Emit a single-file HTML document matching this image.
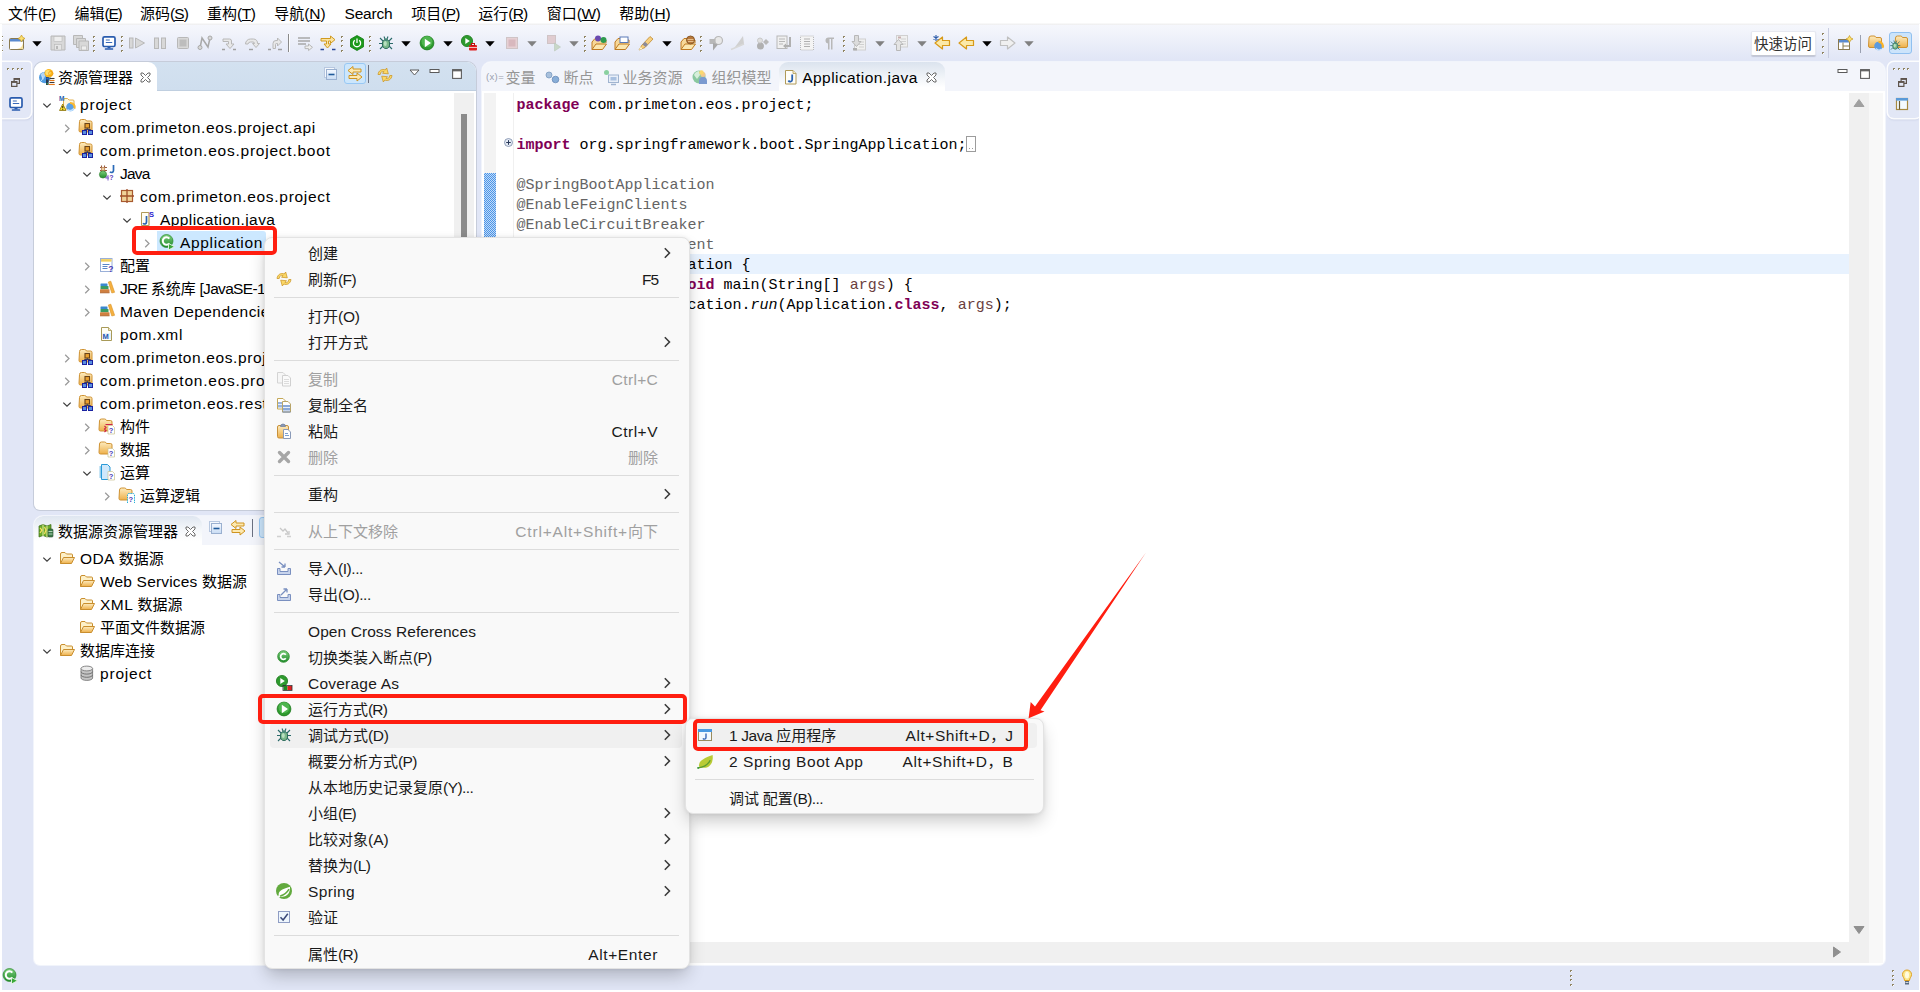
<!DOCTYPE html>
<html lang="zh-CN"><head><meta charset="utf-8"><title>Eclipse</title>
<style>
*{box-sizing:border-box}
html,body{margin:0;padding:0}
body{width:1920px;height:992px;position:relative;overflow:hidden;background:#e1e6f6;
 font-family:"Liberation Sans","Noto Sans CJK SC",sans-serif;font-size:15.5px;color:#000;}
.c{font-size:15px;letter-spacing:0}
.abs{position:absolute}
.t{position:absolute;white-space:nowrap;line-height:20px;height:20px}
svg{position:absolute;overflow:visible}
#menubar{position:absolute;left:0;top:0;width:1920px;height:24px;background:#fff}
#toolbar{position:absolute;left:0;top:24px;width:1920px;height:38px;background:linear-gradient(#f6f7fc 0%,#f2f4fb 20%,#e1e6f6 92%,#e1e6f6 100%)}
.panel{position:absolute;background:#fff;border-radius:9px 9px 6px 6px;overflow:hidden;box-shadow:0 0 0 1px rgba(255,255,255,.55)}
.hdr{position:absolute;left:0;top:0;right:0}
.code{font-family:"Liberation Mono",monospace;font-size:15px;position:absolute;white-space:pre;line-height:20px;height:20px;color:#000}
.kw{color:#7f0055;font-weight:bold}
.an{color:#646464}
.lv{color:#6a3e3e}
.menu{position:absolute;background:#f9f9f9;border:1px solid #e3e3e3;border-radius:8px;box-shadow:0 9px 18px -3px rgba(0,0,0,.24),0 0 4px rgba(0,0,0,.08)}
.mi{position:absolute;white-space:nowrap;line-height:20px;height:20px;color:#1a1a1a}
.dis{color:#a0a0a0}
.sep{position:absolute;height:1px;background:#dcdcdc}
.red{position:absolute;border:4px solid #ff1e10;border-radius:5px}
</style></head>
<body>
<svg width="0" height="0" style="position:absolute"><defs>
<linearGradient id="gf" x1="0" y1="0" x2="0" y2="1"><stop offset="0" stop-color="#fdecc0"/><stop offset="1" stop-color="#eeb04a"/></linearGradient>
<linearGradient id="gg" x1="0" y1="0" x2="0" y2="1"><stop offset="0" stop-color="#7ed07e"/><stop offset="1" stop-color="#1f8a2a"/></linearGradient>
<linearGradient id="gb" x1="0" y1="0" x2="0" y2="1"><stop offset="0" stop-color="#f4f8ff"/><stop offset="1" stop-color="#c8dcf4"/></linearGradient>
</defs></svg>
<div id="menubar"></div>
<div class="t" style="left:8px;top:4px;letter-spacing:-0.843px;"><span class="c">文件</span>(<u>F</u>)</div>
<div class="t" style="left:74.5px;top:4px;letter-spacing:-1.301px;"><span class="c">编辑</span>(<u>E</u>)</div>
<div class="t" style="left:140px;top:4px;letter-spacing:-0.901px;"><span class="c">源码</span>(<u>S</u>)</div>
<div class="t" style="left:207px;top:4px;letter-spacing:-0.443px;"><span class="c">重构</span>(<u>T</u>)</div>
<div class="t" style="left:274.3px;top:4px;letter-spacing:-0.121px;"><span class="c">导航</span>(<u>N</u>)</div>
<div class="t" style="left:344.5px;top:4px;letter-spacing:-0.188px;">Search</div>
<div class="t" style="left:411.3px;top:4px;letter-spacing:-0.834px;"><span class="c">项目</span>(<u>P</u>)</div>
<div class="t" style="left:478.3px;top:4px;letter-spacing:-0.854px;"><span class="c">运行</span>(<u>R</u>)</div>
<div class="t" style="left:546.7px;top:4px;letter-spacing:-0.333px;"><span class="c">窗口</span>(<u>W</u>)</div>
<div class="t" style="left:619.3px;top:4px;letter-spacing:-0.054px;"><span class="c">帮助</span>(<u>H</u>)</div>
<div id="toolbar"></div>
<div class="abs" style="left:1px;top:35.5px;width:2px;height:2px;background:#8f8462"></div><div class="abs" style="left:2px;top:36.5px;width:1px;height:1px;background:#fff"></div><div class="abs" style="left:1px;top:40.2px;width:2px;height:2px;background:#8f8462"></div><div class="abs" style="left:2px;top:41.2px;width:1px;height:1px;background:#fff"></div><div class="abs" style="left:1px;top:44.9px;width:2px;height:2px;background:#8f8462"></div><div class="abs" style="left:2px;top:45.9px;width:1px;height:1px;background:#fff"></div><div class="abs" style="left:1px;top:49.6px;width:2px;height:2px;background:#8f8462"></div><div class="abs" style="left:2px;top:50.6px;width:1px;height:1px;background:#fff"></div>
<svg style="left:8.5px;top:35px" width="16" height="16" viewBox="0 0 16 16" ><rect x="0.5" y="3.5" width="14" height="11" rx="1" fill="#fff" stroke="#8a7a50"/><rect x="1" y="4" width="13" height="2.5" fill="#5a8ad0"/><path d="M8 14 a7 7 0 0 0 6-6v6z" fill="#f7e3a0"/><path d="M12.5 0l1.2 2.3 2.3 1.2-2.3 1.2-1.2 2.3-1.2-2.3-2.3-1.2 2.3-1.2z" fill="#fbe070" stroke="#c89a20" stroke-width=".7"/></svg>
<svg style="left:49.5px;top:35px" width="16" height="16" viewBox="0 0 16 16" ><path d="M1 1h14v14h-14z" fill="#d8d8d8" stroke="#b8b8b8"/><rect x="4" y="1.5" width="8" height="5" fill="#eee" stroke="#b8b8b8" stroke-width=".6"/><rect x="4.5" y="9.5" width="7" height="5.5" fill="#e6e6e6" stroke="#b8b8b8" stroke-width=".6"/><rect x="6" y="11" width="2" height="3" fill="#b8b8b8"/></svg>
<svg style="left:72.5px;top:35px" width="16" height="16" viewBox="0 0 16 16" ><path d="M0.5 0.5h9v9h-9z" fill="#d8d8d8" stroke="#b8b8b8"/><path d="M3.5 3.5h9v9h-9z" fill="#d8d8d8" stroke="#b8b8b8"/><path d="M6 6h9.5v9.5h-9.5z" fill="#d8d8d8" stroke="#b8b8b8"/><rect x="8.5" y="11" width="5" height="4" fill="#eee" stroke="#b8b8b8" stroke-width=".6"/></svg>
<svg style="left:100.5px;top:35px" width="16" height="16" viewBox="0 0 16 16" ><rect x="2" y="1.800" width="12" height="9.700" rx="1.500" fill="#fff" stroke="#2a5cae" stroke-width="1.700"/><path d="M4.800 5h4M4.800 7.500h6.400" stroke="#3a6ab8" stroke-width="1.100"/><path d="M6.500 11.500h3v1.800h-3z" fill="#2a5cae"/><rect x="3.800" y="13.200" width="8.400" height="1.500" rx=".500" fill="#2a5cae"/></svg>
<svg style="left:129px;top:35px" width="16" height="16" viewBox="0 0 16 16" ><rect x="0.5" y="3" width="3.5" height="10" fill="#d8d8d8" stroke="#b8b8b8"/><path d="M6.5 3v10l9-5z" fill="#d8d8d8" stroke="#b8b8b8"/></svg>
<svg style="left:151.5px;top:35px" width="16" height="16" viewBox="0 0 16 16" ><rect x="2.5" y="3" width="4" height="10.5" fill="#d8d8d8" stroke="#b8b8b8"/><rect x="9.5" y="3" width="4" height="10.5" fill="#d8d8d8" stroke="#b8b8b8"/></svg>
<svg style="left:174.5px;top:35px" width="16" height="16" viewBox="0 0 16 16" ><rect x="2.5" y="2.5" width="11" height="11" rx="1" fill="#d8d8d8" stroke="#b8b8b8"/><rect x="4.5" y="4.5" width="7" height="7" fill="#bdbdbd"/></svg>
<svg style="left:197px;top:35px" width="16" height="16" viewBox="0 0 16 16" ><path d="M3 13 L5 3 L11 12 L13 3" fill="none" stroke="#a8a8a8" stroke-width="1.5"/><circle cx="3" cy="12.5" r="2" fill="#d8d8d8" stroke="#a8a8a8"/><circle cx="13" cy="3" r="2" fill="#d8d8d8" stroke="#a8a8a8"/></svg>
<svg style="left:220.5px;top:35px" width="16" height="16" viewBox="0 0 16 16" ><path d="M2 4h6.5a2 2 0 0 1 2 2v3h2.5l-4 4.5l-4-4.5h2.5v-2.5h-5.500z" fill="#e8e8e8" stroke="#b8b8b8"/><path d="M1 14.5h3M12 14.5h3" stroke="#a0a0a0" stroke-width="1.4"/></svg>
<svg style="left:243.5px;top:35px" width="16" height="16" viewBox="0 0 16 16" ><path d="M1.500 9 a5 5 0 0 1 5-5h3a4 4 0 0 1 4 4.500h2l-3.500 4-3.500-4h2a1.500 1.500 0 0 0-1.500-1.500h-2.500a2.500 2.500 0 0 0-2.500 2z" fill="#e8e8e8" stroke="#b8b8b8"/><path d="M5 14.5h4" stroke="#a0a0a0" stroke-width="1.4"/></svg>
<svg style="left:266.5px;top:35px" width="16" height="16" viewBox="0 0 16 16" ><path d="M6 13.5v-5a3 3 0 0 1 3-3h1.500v-2.500l4 4-4 4v-2.500h-1a1 1 0 0 0-1 1v4z" fill="#e8e8e8" stroke="#b8b8b8"/><path d="M1 14.500h3M11 14.500h4" stroke="#a0a0a0" stroke-width="1.400"/></svg>
<svg style="left:297px;top:35px" width="16" height="16" viewBox="0 0 16 16" ><path d="M1 3h12M1 6h12M1 9h8" stroke="#a8a8a8" stroke-width="1.4"/><path d="M8 11h3.500v-2l4 3.300-4 3.300v-2h-3.500z" fill="#eee" stroke="#b8b8b8"/></svg>
<svg style="left:320px;top:35px" width="16" height="16" viewBox="0 0 16 16" ><path d="M1 3.500h9.500v-2.500l4.500 3.700-4.500 3.700v-2.400h-2v3h2.500l-3.500 4-3.500-4h2.500v-3h-5.500z" fill="#fbe3a0" stroke="#d09a20"/><path d="M0.500 14.500h3.500M12 14.500h3.500" stroke="#2a4a9a" stroke-width="1.5"/></svg>
<svg style="left:348.5px;top:35px" width="16" height="16" viewBox="0 0 16 16" ><path d="M8 0.500 L14.500 4.200 V11.800 L8 15.500 L1.500 11.800 V4.200z" fill="#1c9a1c" stroke="#0e7a0e" stroke-width=".8"/><path d="M5.800 5.300a3.600 3.600 0 1 0 4.400 0" fill="none" stroke="#fff" stroke-width="1.300"/><path d="M8 3.500v4.500" stroke="#fff" stroke-width="1.300"/></svg>
<svg style="left:377.5px;top:35px" width="16" height="16" viewBox="0 0 16 16" ><path d="M2 3l3 3M14 3l-3 3M1 8.500h3.500M15 8.500h-3.500M2 14l3-3M14 14l-3-3M6 1.500l1 2.500M10 1.500l-1 2.500" stroke="#2a6a6a" stroke-width="1.100" fill="none"/><ellipse cx="8" cy="9" rx="3.600" ry="4.500" fill="#7ab88a" stroke="#2a6a5a"/><ellipse cx="8" cy="4.800" rx="2" ry="1.500" fill="#4a8a7a"/><ellipse cx="7.300" cy="8.500" rx="1.500" ry="2.500" fill="#b8e0c0"/></svg>
<svg style="left:419px;top:35px" width="16" height="16" viewBox="0 0 16 16" ><circle cx="8" cy="8" r="6.900" fill="#2e9a2e" stroke="#1a7a1a" stroke-width=".800"/><circle cx="8" cy="6.500" r="5.500" fill="#5cc05c" opacity=".7"/><path d="M5.800 3.800v8.400l6.200-4.200z" fill="#fff"/></svg>
<svg style="left:461px;top:35px" width="16" height="16" viewBox="0 0 16 16" ><circle cx="6" cy="6" r="5.600" fill="#2e9a2e" stroke="#1a7a1a" stroke-width=".800"/><path d="M4.300 3v6l4.500-3z" fill="#fff"/><rect x="8" y="10" width="8" height="5.500" rx="1" fill="#e02020"/><rect x="10.500" y="8.500" width="3" height="2" fill="none" stroke="#c01010" stroke-width="1"/><rect x="8" y="12" width="8" height="1" fill="#fff" opacity=".7"/></svg>
<svg style="left:503.5px;top:35px" width="16" height="16" viewBox="0 0 16 16" ><rect x="2.500" y="2.500" width="11" height="11" fill="#e6d0d4" stroke="#cfc4c6"/><rect x="4.500" y="4.500" width="7" height="7" fill="#d8b8be"/></svg>
<svg style="left:546px;top:35px" width="16" height="16" viewBox="0 0 16 16" ><rect x="1.500" y="0.500" width="8" height="8" fill="#e0ccd0" stroke="#cfc4c6"/><path d="M8.500 8v8l6-4z" fill="#c8d8c8" stroke="#b8c8b8" stroke-width=".600"/></svg>
<svg style="left:591px;top:35px" width="16" height="16" viewBox="0 0 16 16" ><path d="M1 14.500 V7 l3-3.500 h5 l1 1.500 h5 v3" fill="#f7d898" stroke="#c07a20"/><path d="M1 14.500 L5 9 h10.500 L11.500 14.500z" fill="#fbe7b0" stroke="#c07a20"/><circle cx="7" cy="3.500" r="3" fill="#6a4ab0"/><circle cx="12.500" cy="5" r="3" fill="#2e9a4e"/></svg>
<svg style="left:614px;top:35px" width="16" height="16" viewBox="0 0 16 16" ><path d="M1 14.500 V7 l3-3.500 h5 l1 1.500 h5 v3" fill="#f7d898" stroke="#c07a20"/><path d="M1 14.500 L5 9 h10.500 L11.500 14.500z" fill="#fbe7b0" stroke="#c07a20"/><rect x="6" y="2" width="8" height="5.500" fill="#fff" stroke="#5a7ab8"/></svg>
<svg style="left:638px;top:35px" width="16" height="16" viewBox="0 0 16 16" ><path d="M1 15 L4 10 L12 1.500 L15 4 L7 12.500z" fill="#f7d080" stroke="#c08a30" stroke-width=".800"/><path d="M4.500 9.500 L7.500 12 L10 9.500 L7 6.800z" fill="#8a8a9a"/><path d="M1 15l1.500-3 2 1.800z" fill="#fff8d0"/></svg>
<svg style="left:680px;top:35px" width="16" height="16" viewBox="0 0 16 16" ><path d="M1 14.500 V7 l3-3.500 h5 l1 1.500 h5 v3" fill="#f7d898" stroke="#c07a20"/><path d="M1 14.500 L5 9 h10.500 L11.500 14.500z" fill="#fbe7b0" stroke="#c07a20"/><circle cx="10.500" cy="5" r="4" fill="#b8783a" stroke="#8a5a2a"/><path d="M7.500 4.500h6M8 6.500h5.500" stroke="#f0d0a0" stroke-width=".800"/></svg>
<svg style="left:707.5px;top:35px" width="16" height="16" viewBox="0 0 16 16" ><circle cx="10.500" cy="5.500" r="4" fill="#e8e8e8" stroke="#b8b8b8" stroke-width="1.200"/><rect x="1.500" y="4" width="6" height="5" fill="#b8b8b8"/><path d="M5 8v7.500l5-6z" fill="#a8a8a8"/></svg>
<svg style="left:730px;top:35px" width="16" height="16" viewBox="0 0 16 16" ><path d="M13 1 L14 9 L4 13.500z" fill="#d0d0d0"/><path d="M1 14.500 L14 9" stroke="#d8d8d8" stroke-width="1.500"/></svg>
<svg style="left:754px;top:35px" width="16" height="16" viewBox="0 0 16 16" ><circle cx="6.500" cy="11" r="3.500" fill="#b0b0b0"/><circle cx="6" cy="5.500" r="2.500" fill="#e0e0e0" stroke="#c8c8c8"/><path d="M9 7 l3-3 3 3-3 3z" fill="#b8b8b8"/></svg>
<svg style="left:776px;top:35px" width="16" height="16" viewBox="0 0 16 16" ><rect x="1" y="1" width="10" height="12.500" fill="#f0f0f0" stroke="#b8b8b8"/><path d="M3 4h6M3 6.500h6M3 9h4" stroke="#b8b8b8"/><path d="M14 2v9h-5" fill="none" stroke="#b0b0b0" stroke-width="2"/><path d="M10 8.500l-3 2.500 3 2.500z" fill="#b0b0b0"/></svg>
<svg style="left:799px;top:35px" width="16" height="16" viewBox="0 0 16 16" ><rect x="1.500" y="1" width="13" height="14" fill="#f4f4f4" stroke="#b8b8b8" stroke-dasharray="1 1"/><path d="M5 4h6M5 6.500h6M5 9h6M5 11.500h6" stroke="#b0b0b0" stroke-width="1.200"/></svg>
<svg style="left:822px;top:35px" width="16" height="16" viewBox="0 0 16 16" ><path d="M6.500 8.500a3 3 0 0 1 0-6h5.500v1.500h-1.500v10.500h-1.500v-10.500h-1.500v10.500h-1.500v-6z" fill="#b8b8b8"/></svg>
<svg style="left:851px;top:35px" width="16" height="16" viewBox="0 0 16 16" ><rect x="3.500" y="4" width="11" height="11" fill="#f0f0f0" stroke="#d0d0d0"/><path d="M8 7h5M8 9.500h5M8 12h5" stroke="#d0d0d0"/><path d="M3.500 0.500h4v6h2.500l-4.500 5-4.500-5h2.500z" fill="#dcdcdc" stroke="#b8b8b8"/><rect x="2" y="13" width="4" height="2.500" fill="#b0b0b0"/></svg>
<svg style="left:893px;top:35px" width="16" height="16" viewBox="0 0 16 16" ><rect x="3.500" y="0.500" width="11" height="11.500" fill="#f0f0f0" stroke="#d0d0d0"/><path d="M8 4h5M8 6.500h5M8 9h5" stroke="#d0d0d0"/><rect x="5" y="1.500" width="3" height="2" fill="#c8b0b0"/><path d="M3.500 15.500h4v-6h2.500l-4.500-5-4.500 5h2.500z" fill="#e4e4e4" stroke="#b8b8b8"/></svg>
<svg style="left:934px;top:35px" width="16" height="16" viewBox="0 0 16 16" ><path d="M15.500 5.500v5h-7v3.500l-7.500-6 7.500-6v3.500z" fill="#fbe9a8" stroke="#d89a18" stroke-width="1.200" stroke-linejoin="round"/><path d="M2 0v6M-.500 1.500l5 3M-.500 4.500l5-3" stroke="#2a5aa8" stroke-width="1.100"/></svg>
<svg style="left:958px;top:35px" width="16" height="16" viewBox="0 0 16 16" ><path d="M15.500 5.500v5h-7v3.500l-7.500-6 7.500-6v3.500z" fill="#fbe9a8" stroke="#d89a18" stroke-width="1.200" stroke-linejoin="round"/></svg>
<svg style="left:1000px;top:35px" width="16" height="16" viewBox="0 0 16 16" ><path d="M0.500 5.500v5h7v3.500l7.500-6-7.500-6v3.500z" fill="#f0f0f0" stroke="#c0c0c0" stroke-width="1.200" stroke-linejoin="round"/></svg>
<svg style="left:31.5px;top:40.5px" width="10" height="6" viewBox="0 0 10 6"><path d="M0.3 0.3h9.4L5 5.4z" fill="#000"/></svg>
<svg style="left:400.5px;top:40.5px" width="10" height="6" viewBox="0 0 10 6"><path d="M0.3 0.3h9.4L5 5.4z" fill="#000"/></svg>
<svg style="left:442.5px;top:40.5px" width="10" height="6" viewBox="0 0 10 6"><path d="M0.3 0.3h9.4L5 5.4z" fill="#000"/></svg>
<svg style="left:484.5px;top:40.5px" width="10" height="6" viewBox="0 0 10 6"><path d="M0.3 0.3h9.4L5 5.4z" fill="#000"/></svg>
<svg style="left:661.5px;top:40.5px" width="10" height="6" viewBox="0 0 10 6"><path d="M0.3 0.3h9.4L5 5.4z" fill="#000"/></svg>
<svg style="left:981.5px;top:40.5px" width="10" height="6" viewBox="0 0 10 6"><path d="M0.3 0.3h9.4L5 5.4z" fill="#000"/></svg>
<svg style="left:526.5px;top:40.5px" width="10" height="6" viewBox="0 0 10 6"><path d="M0.3 0.3h9.4L5 5.4z" fill="#808080"/></svg>
<svg style="left:568.5px;top:40.5px" width="10" height="6" viewBox="0 0 10 6"><path d="M0.3 0.3h9.4L5 5.4z" fill="#808080"/></svg>
<svg style="left:874.5px;top:40.5px" width="10" height="6" viewBox="0 0 10 6"><path d="M0.3 0.3h9.4L5 5.4z" fill="#808080"/></svg>
<svg style="left:916.5px;top:40.5px" width="10" height="6" viewBox="0 0 10 6"><path d="M0.3 0.3h9.4L5 5.4z" fill="#808080"/></svg>
<svg style="left:1023.5px;top:40.5px" width="10" height="6" viewBox="0 0 10 6"><path d="M0.3 0.3h9.4L5 5.4z" fill="#808080"/></svg>
<div class="abs" style="left:93px;top:35.5px;width:2px;height:2px;background:#8f8462"></div><div class="abs" style="left:94px;top:36.5px;width:1px;height:1px;background:#fff"></div><div class="abs" style="left:93px;top:40.2px;width:2px;height:2px;background:#8f8462"></div><div class="abs" style="left:94px;top:41.2px;width:1px;height:1px;background:#fff"></div><div class="abs" style="left:93px;top:44.9px;width:2px;height:2px;background:#8f8462"></div><div class="abs" style="left:94px;top:45.9px;width:1px;height:1px;background:#fff"></div><div class="abs" style="left:93px;top:49.6px;width:2px;height:2px;background:#8f8462"></div><div class="abs" style="left:94px;top:50.6px;width:1px;height:1px;background:#fff"></div>
<div class="abs" style="left:121px;top:35.5px;width:2px;height:2px;background:#8f8462"></div><div class="abs" style="left:122px;top:36.5px;width:1px;height:1px;background:#fff"></div><div class="abs" style="left:121px;top:40.2px;width:2px;height:2px;background:#8f8462"></div><div class="abs" style="left:122px;top:41.2px;width:1px;height:1px;background:#fff"></div><div class="abs" style="left:121px;top:44.9px;width:2px;height:2px;background:#8f8462"></div><div class="abs" style="left:122px;top:45.9px;width:1px;height:1px;background:#fff"></div><div class="abs" style="left:121px;top:49.6px;width:2px;height:2px;background:#8f8462"></div><div class="abs" style="left:122px;top:50.6px;width:1px;height:1px;background:#fff"></div>
<div class="abs" style="left:341px;top:35.5px;width:2px;height:2px;background:#8f8462"></div><div class="abs" style="left:342px;top:36.5px;width:1px;height:1px;background:#fff"></div><div class="abs" style="left:341px;top:40.2px;width:2px;height:2px;background:#8f8462"></div><div class="abs" style="left:342px;top:41.2px;width:1px;height:1px;background:#fff"></div><div class="abs" style="left:341px;top:44.9px;width:2px;height:2px;background:#8f8462"></div><div class="abs" style="left:342px;top:45.9px;width:1px;height:1px;background:#fff"></div><div class="abs" style="left:341px;top:49.6px;width:2px;height:2px;background:#8f8462"></div><div class="abs" style="left:342px;top:50.6px;width:1px;height:1px;background:#fff"></div>
<div class="abs" style="left:369px;top:35.5px;width:2px;height:2px;background:#8f8462"></div><div class="abs" style="left:370px;top:36.5px;width:1px;height:1px;background:#fff"></div><div class="abs" style="left:369px;top:40.2px;width:2px;height:2px;background:#8f8462"></div><div class="abs" style="left:370px;top:41.2px;width:1px;height:1px;background:#fff"></div><div class="abs" style="left:369px;top:44.9px;width:2px;height:2px;background:#8f8462"></div><div class="abs" style="left:370px;top:45.9px;width:1px;height:1px;background:#fff"></div><div class="abs" style="left:369px;top:49.6px;width:2px;height:2px;background:#8f8462"></div><div class="abs" style="left:370px;top:50.6px;width:1px;height:1px;background:#fff"></div>
<div class="abs" style="left:584px;top:35.5px;width:2px;height:2px;background:#8f8462"></div><div class="abs" style="left:585px;top:36.5px;width:1px;height:1px;background:#fff"></div><div class="abs" style="left:584px;top:40.2px;width:2px;height:2px;background:#8f8462"></div><div class="abs" style="left:585px;top:41.2px;width:1px;height:1px;background:#fff"></div><div class="abs" style="left:584px;top:44.9px;width:2px;height:2px;background:#8f8462"></div><div class="abs" style="left:585px;top:45.9px;width:1px;height:1px;background:#fff"></div><div class="abs" style="left:584px;top:49.6px;width:2px;height:2px;background:#8f8462"></div><div class="abs" style="left:585px;top:50.6px;width:1px;height:1px;background:#fff"></div>
<div class="abs" style="left:700px;top:35.5px;width:2px;height:2px;background:#8f8462"></div><div class="abs" style="left:701px;top:36.5px;width:1px;height:1px;background:#fff"></div><div class="abs" style="left:700px;top:40.2px;width:2px;height:2px;background:#8f8462"></div><div class="abs" style="left:701px;top:41.2px;width:1px;height:1px;background:#fff"></div><div class="abs" style="left:700px;top:44.9px;width:2px;height:2px;background:#8f8462"></div><div class="abs" style="left:701px;top:45.9px;width:1px;height:1px;background:#fff"></div><div class="abs" style="left:700px;top:49.6px;width:2px;height:2px;background:#8f8462"></div><div class="abs" style="left:701px;top:50.6px;width:1px;height:1px;background:#fff"></div>
<div class="abs" style="left:843px;top:35.5px;width:2px;height:2px;background:#8f8462"></div><div class="abs" style="left:844px;top:36.5px;width:1px;height:1px;background:#fff"></div><div class="abs" style="left:843px;top:40.2px;width:2px;height:2px;background:#8f8462"></div><div class="abs" style="left:844px;top:41.2px;width:1px;height:1px;background:#fff"></div><div class="abs" style="left:843px;top:44.9px;width:2px;height:2px;background:#8f8462"></div><div class="abs" style="left:844px;top:45.9px;width:1px;height:1px;background:#fff"></div><div class="abs" style="left:843px;top:49.6px;width:2px;height:2px;background:#8f8462"></div><div class="abs" style="left:844px;top:50.6px;width:1px;height:1px;background:#fff"></div>
<div class="abs" style="left:288px;top:34px;width:1px;height:18px;background:#8a8a8a"></div><div class="abs" style="left:289px;top:34px;width:1px;height:18px;background:#fff"></div>
<div class="abs" style="left:1750.500px;top:30.500px;width:65px;height:25px;background:#fff;border:1px solid #e6e8f0;border-bottom-color:#c4c7d2;border-radius:2px;box-shadow:0 1px 1px rgba(90,95,120,.25)"></div>
<div class="t" style="left:1754px;top:34px;color:#303030"><span class="c" style="font-size:14.500px">快速访问</span></div>
<div class="abs" style="left:1822px;top:33.0px;width:2px;height:2px;background:#8f8462"></div><div class="abs" style="left:1823px;top:34.0px;width:1px;height:1px;background:#fff"></div>
<div class="abs" style="left:1822px;top:39.4px;width:2px;height:2px;background:#8f8462"></div><div class="abs" style="left:1823px;top:40.4px;width:1px;height:1px;background:#fff"></div>
<div class="abs" style="left:1822px;top:45.8px;width:2px;height:2px;background:#8f8462"></div><div class="abs" style="left:1823px;top:46.8px;width:1px;height:1px;background:#fff"></div>
<div class="abs" style="left:1822px;top:52.2px;width:2px;height:2px;background:#8f8462"></div><div class="abs" style="left:1823px;top:53.2px;width:1px;height:1px;background:#fff"></div>
<div class="abs" style="left:1828px;top:28px;width:1px;height:30px;background:#c8cce0"></div>
<svg style="left:1837px;top:35px" width="16" height="16" viewBox="0 0 16 16" ><rect x="1.500" y="4.500" width="11" height="10" fill="#fff" stroke="#8a7a50"/><rect x="2" y="5" width="10" height="2.500" fill="#5a8ad0"/><path d="M6 7.500v7M6 11h6.500" stroke="#8a7a50"/><path d="M12.500 0.500l1.200 2.300 2.300 1.200-2.300 1.200-1.200 2.300-1.200-2.300-2.300-1.200 2.300-1.200z" fill="#fbe070" stroke="#c89a20" stroke-width=".700"/></svg>
<div class="abs" style="left:1860px;top:35px;width:1px;height:18px;background:#9aa0b0"></div>
<svg style="left:1868px;top:35px" width="16" height="16" viewBox="0 0 16 16" ><path d="M1.0 3.0 q0-2 2-2 h3 q1.500 0 2 1.500 h4.0 q1.500 0 1.500 1.500 v7.0 q0 1.500-1.500 1.500 h-10.0 q-1.500 0-1.500-1.500z" fill="url(#gf)" stroke="#cf9232" stroke-width="1"/><circle cx="10.500" cy="11" r="4.300" fill="#5a9ae0"/><path d="M8 13.500a4 4 0 0 0 5.500 .500" fill="none" stroke="#cfe4fb" stroke-width="1.200"/><path d="M10.500 6.800a4.300 4.300 0 0 1 4 6" fill="none" stroke="#fbb428" stroke-width="2.200"/></svg>
<div class="abs" style="left:1889px;top:32px;width:23px;height:22px;background:#cce4fb;border:1px solid #90c0f0;border-radius:3px"></div>
<svg style="left:1892px;top:35px" width="16" height="16" viewBox="0 0 16 16" ><path d="M3.5 3.0 q0-2 2-2 h3 q1.500 0 2 1.500 h3.5 q1.500 0 1.500 1.500 v7.0 q0 1.500-1.500 1.500 h-9.5 q-1.500 0-1.500-1.500z" fill="url(#gf)" stroke="#cf9232" stroke-width="1"/><g transform="translate(-2.500,4.500) scale(.72)"><path d="M2 3l3 3M14 3l-3 3M1 8.500h3.500M15 8.500h-3.500M2 14l3-3M14 14l-3-3M6 1.500l1 2.500M10 1.500l-1 2.500" stroke="#2a6a6a" stroke-width="1.100" fill="none"/><ellipse cx="8" cy="9" rx="3.600" ry="4.500" fill="#7ab88a" stroke="#2a6a5a"/><ellipse cx="8" cy="4.800" rx="2" ry="1.500" fill="#4a8a7a"/><ellipse cx="7.300" cy="8.500" rx="1.500" ry="2.500" fill="#b8e0c0"/></g></svg>
<div class="abs" style="left:-3px;top:62px;width:33.500px;height:56px;border-radius:0 3px 6px 6px;background:#e2e7f6;box-shadow:0 0 0 1.500px rgba(255,255,255,.9), 1px 2px 2px rgba(120,130,170,.25)"></div>
<div class="abs" style="left:1888px;top:62px;width:33px;height:56px;border-radius:6px 0 6px 6px;background:#e2e7f6;box-shadow:0 0 0 1.500px rgba(255,255,255,.9), 0 2px 2px rgba(120,130,170,.25)"></div>
<div class="abs" style="left:0;top:22.500px;width:1920px;height:2px;background:linear-gradient(#fff,#efefef 60%,#f3f3f6)"></div>
<div class="abs" style="left:7.0px;top:67.5px;width:2px;height:2px;background:#8f8462"></div><div class="abs" style="left:8.0px;top:68.5px;width:1px;height:1px;background:#fff"></div><div class="abs" style="left:11.8px;top:67.5px;width:2px;height:2px;background:#8f8462"></div><div class="abs" style="left:12.8px;top:68.5px;width:1px;height:1px;background:#fff"></div><div class="abs" style="left:16.6px;top:67.5px;width:2px;height:2px;background:#8f8462"></div><div class="abs" style="left:17.6px;top:68.5px;width:1px;height:1px;background:#fff"></div><div class="abs" style="left:21.4px;top:67.5px;width:2px;height:2px;background:#8f8462"></div><div class="abs" style="left:22.4px;top:68.5px;width:1px;height:1px;background:#fff"></div>
<svg style="left:10.7px;top:77.5px" width="9" height="9" viewBox="0 0 9 9" ><rect x="3.100" y="0.600" width="5.300" height="4.800" fill="none" stroke="#5e544c" stroke-width="1.200"/><path d="M3.100 1.200h5.300" stroke="#5e544c" stroke-width="1.400"/><rect x="0.600" y="3.600" width="5.300" height="4.800" fill="#e3e8f7" stroke="#5e544c" stroke-width="1.200"/><path d="M0.600 4.200h5.300" stroke="#5e544c" stroke-width="1.400"/></svg>
<svg style="left:7.5px;top:95.5px" width="16" height="16" viewBox="0 0 16 16" ><rect x="2" y="1.800" width="12" height="9.700" rx="1.500" fill="#fff" stroke="#2a5cae" stroke-width="1.700"/><path d="M4.800 5h4M4.800 7.500h6.400" stroke="#3a6ab8" stroke-width="1.100"/><path d="M6.500 11.500h3v1.800h-3z" fill="#2a5cae"/><rect x="3.800" y="13.200" width="8.400" height="1.500" rx=".500" fill="#2a5cae"/></svg>
<div class="abs" style="left:1893.0px;top:67.5px;width:2px;height:2px;background:#8f8462"></div><div class="abs" style="left:1894.0px;top:68.5px;width:1px;height:1px;background:#fff"></div><div class="abs" style="left:1897.8px;top:67.5px;width:2px;height:2px;background:#8f8462"></div><div class="abs" style="left:1898.8px;top:68.5px;width:1px;height:1px;background:#fff"></div><div class="abs" style="left:1902.6px;top:67.5px;width:2px;height:2px;background:#8f8462"></div><div class="abs" style="left:1903.6px;top:68.5px;width:1px;height:1px;background:#fff"></div><div class="abs" style="left:1907.4px;top:67.5px;width:2px;height:2px;background:#8f8462"></div><div class="abs" style="left:1908.4px;top:68.5px;width:1px;height:1px;background:#fff"></div>
<svg style="left:1897.5px;top:77.5px" width="9" height="9" viewBox="0 0 9 9" ><rect x="3.100" y="0.600" width="5.300" height="4.800" fill="none" stroke="#5e544c" stroke-width="1.200"/><path d="M3.100 1.200h5.300" stroke="#5e544c" stroke-width="1.400"/><rect x="0.600" y="3.600" width="5.300" height="4.800" fill="#e3e8f7" stroke="#5e544c" stroke-width="1.200"/><path d="M0.600 4.200h5.300" stroke="#5e544c" stroke-width="1.400"/></svg>
<svg style="left:1894px;top:96px" width="16" height="16" viewBox="0 0 16 16" ><rect x="2.500" y="2.500" width="11" height="11" fill="#f4fbff" stroke="#a88a40" stroke-width="1.200"/><rect x="2" y="2" width="12" height="2.600" fill="#5a9ad8"/><path d="M5.500 5v8.500" stroke="#6a5a30" stroke-width="1.200"/></svg>
<div class="panel" style="left:34px;top:62px;width:442px;height:448px;box-shadow:0 0 0 1px #c6ccda">
<div class="hdr" style="height:29px;background:linear-gradient(#d3e1f0,#cfdeee);border-bottom:1px solid #c0cfe0"></div>
<div class="abs" style="left:0;top:0;width:123px;height:30px;background:#fff;border-radius:9px 9px 0 0"></div>
<div class="abs" style="left:420px;top:31px;width:20px;height:417px;background:#f0f0f0"></div>
<div class="abs" style="left:427px;top:52px;width:6px;height:400px;background:#8b8b8b"></div>
</div>
<div class="abs" style="left:157px;top:231px;width:109px;height:22px;background:#cce8ff;border-radius:0 3px 3px 0"></div>
<svg style="left:39px;top:96px" width="16" height="16" viewBox="0 0 16 16" ><path d="M4.3 7.6 L8 11.2 L11.700 7.600" fill="none" stroke="#3c3c3c" stroke-width="1.250"/></svg>
<svg style="left:59px;top:96px" width="16" height="16" viewBox="0 0 16 16" ><path d="M4.500 4 q0-1.500 1.500-1.500 h2.500 l1.500 1.500 h4 q1 0 1 1 v8 h-10.500z" fill="#fdf6e0" stroke="#e0b050" stroke-width="1"/><text x="0" y="5" font-size="6.500" font-weight="bold" fill="#1f5fb0" font-family="Liberation Sans,sans-serif">M</text><circle cx="11.500" cy="11" r="4.300" fill="#5aa0e6"/><path d="M8.500 13.500a4 4 0 0 0 6.500-1.500" fill="none" stroke="#bfe0ff" stroke-width="1.500"/><path d="M11 7a4.300 4.300 0 0 1 4.500 5.500" fill="none" stroke="#fbb830" stroke-width="2.200"/><path d="M0.500 14.500 L3.700 8 L7 14.500z" fill="#fbe22a" stroke="#8a7410" stroke-width=".800" stroke-linejoin="round"/><path d="M3.750 10v2.300M3.750 13.100v.800" stroke="#1a1a1a" stroke-width="1"/></svg>
<div class="t" style="left:80px;top:95px;letter-spacing:0.810px;">project</div>
<svg style="left:59px;top:119px" width="16" height="16" viewBox="0 0 16 16" ><path d="M6.200 5.800 L10 9.500 L6.200 13.200" fill="none" stroke="#9a9a9a" stroke-width="1.250"/></svg>
<svg style="left:79px;top:119px" width="16" height="16" viewBox="0 0 16 16" ><path d="M0.5 2.5 q0-2 2-2 h3 q1.500 0 2 1.500 h4.0 q1.500 0 1.500 1.500 v8.0 q0 1.500-1.500 1.500 h-10.0 q-1.500 0-1.500-1.500z" fill="url(#gf)" stroke="#cf9232" stroke-width="1"/><rect x="6" y="4.500" width="4.500" height="4.500" fill="#e9a030" stroke="#6b4418" stroke-width="1.100"/><path d="M8.250 9v2M5.500 11.500v-1h6v1" stroke="#3a3a5a" fill="none" stroke-width="1"/><rect x="3.500" y="11.500" width="4" height="4" fill="#5a90e0" stroke="#1a22a0" stroke-width="1"/><rect x="9.500" y="11.500" width="4" height="4" fill="#5a90e0" stroke="#1a22a0" stroke-width="1"/></svg>
<div class="t" style="left:100px;top:118px;letter-spacing:0.596px;">com.primeton.eos.project.api</div>
<svg style="left:59px;top:142px" width="16" height="16" viewBox="0 0 16 16" ><path d="M4.3 7.6 L8 11.2 L11.700 7.600" fill="none" stroke="#3c3c3c" stroke-width="1.250"/></svg>
<svg style="left:79px;top:142px" width="16" height="16" viewBox="0 0 16 16" ><path d="M0.5 2.5 q0-2 2-2 h3 q1.500 0 2 1.500 h4.0 q1.500 0 1.500 1.500 v8.0 q0 1.500-1.500 1.500 h-10.0 q-1.500 0-1.500-1.500z" fill="url(#gf)" stroke="#cf9232" stroke-width="1"/><rect x="6" y="4.500" width="4.500" height="4.500" fill="#e9a030" stroke="#6b4418" stroke-width="1.100"/><path d="M8.250 9v2M5.500 11.500v-1h6v1" stroke="#3a3a5a" fill="none" stroke-width="1"/><rect x="3.500" y="11.500" width="4" height="4" fill="#5a90e0" stroke="#1a22a0" stroke-width="1"/><rect x="9.500" y="11.500" width="4" height="4" fill="#5a90e0" stroke="#1a22a0" stroke-width="1"/></svg>
<div class="t" style="left:100px;top:141px;letter-spacing:0.766px;">com.primeton.eos.project.boot</div>
<svg style="left:79px;top:165px" width="16" height="16" viewBox="0 0 16 16" ><path d="M4.3 7.6 L8 11.2 L11.700 7.600" fill="none" stroke="#3c3c3c" stroke-width="1.250"/></svg>
<svg style="left:99px;top:165px" width="16" height="16" viewBox="0 0 16 16" ><path d="M2.500 0.500v7M5.500 0.500v7M1 2.500h7M1 5.500h7" stroke="#9a5a3a" stroke-width="1.100"/><rect x="2.500" y="2.500" width="3" height="3" fill="#f0d0a0"/><circle cx="4" cy="9.500" r="3.600" fill="url(#gg)" stroke="#2a7a2a" stroke-width=".600"/><path d="M14.500 0v5.500a2 2 0 0 1-3.500 1.300" fill="none" stroke="#2a6ab8" stroke-width="1.700"/><text x="10.300" y="15" font-size="7" font-weight="bold" fill="#5a3ab8" font-family="Liberation Sans,sans-serif">?</text><path d="M9 10.500l-2.500 2.500h3.500M9 10.500v5" stroke="#7a5ac8" stroke-width="1" fill="none"/></svg>
<div class="t" style="left:120px;top:164px;letter-spacing:-0.812px;">Java</div>
<svg style="left:99px;top:188px" width="16" height="16" viewBox="0 0 16 16" ><path d="M4.3 7.6 L8 11.2 L11.700 7.600" fill="none" stroke="#3c3c3c" stroke-width="1.250"/></svg>
<svg style="left:119px;top:188px" width="16" height="16" viewBox="0 0 16 16" ><rect x="2.500" y="2.500" width="11" height="11" fill="#f0d49a" stroke="#a85a30" stroke-width="1.200"/><path d="M8 1v14M1 8h14" stroke="#a0502a" stroke-width="1.300"/></svg>
<div class="t" style="left:140px;top:187px;letter-spacing:0.695px;">com.primeton.eos.project</div>
<svg style="left:119px;top:211px" width="16" height="16" viewBox="0 0 16 16" ><path d="M4.3 7.6 L8 11.2 L11.700 7.600" fill="none" stroke="#3c3c3c" stroke-width="1.250"/></svg>
<svg style="left:139px;top:211px" width="16" height="16" viewBox="0 0 16 16" ><path d="M2.500 1.500h7.500v13h-7.500z" fill="#fffdf4" stroke="#b09a58" stroke-width="1"/><path d="M10 1.500v13" stroke="#c8b880"/><path d="M7.500 5v6a2 2 0 0 1-3.500 1.300" fill="none" stroke="#2a62b0" stroke-width="1.700"/><text x="10" y="6" font-size="7.500" font-weight="bold" fill="#2a22d0" font-family="Liberation Sans,sans-serif">S</text></svg>
<div class="t" style="left:160px;top:210px;letter-spacing:0.426px;">Application.java</div>
<svg style="left:139px;top:234px" width="16" height="16" viewBox="0 0 16 16" ><path d="M6.200 5.800 L10 9.500 L6.200 13.200" fill="none" stroke="#9a9a9a" stroke-width="1.250"/></svg>
<svg style="left:159px;top:234px" width="16" height="16" viewBox="0 0 16 16" ><circle cx="7.500" cy="7" r="6.500" fill="url(#gg)" stroke="#2a8a2a" stroke-width=".700"/><path d="M10.300 4.600a3.700 3.700 0 1 0 0 4.800" fill="none" stroke="#fff" stroke-width="2"/><path d="M9.500 9.500v6.500l6-3.300z" fill="#3aa83a" stroke="#eaf6ea" stroke-width=".900" stroke-linejoin="round"/></svg>
<div class="t" style="left:180px;top:233px;letter-spacing:0.652px;">Application</div>
<svg style="left:79px;top:257px" width="16" height="16" viewBox="0 0 16 16" ><path d="M6.200 5.800 L10 9.500 L6.200 13.200" fill="none" stroke="#9a9a9a" stroke-width="1.250"/></svg>
<svg style="left:99px;top:257px" width="16" height="16" viewBox="0 0 16 16" ><rect x="1.500" y="1.500" width="11.500" height="13" fill="#fff" stroke="#9ab0d8"/><rect x="2" y="2" width="10.500" height="2.800" fill="#f7dc78"/><path d="M2 3.200h10.500" stroke="#e8c050" stroke-width=".800"/><path d="M3.500 7.500h7M3.500 9.500h5M3.500 11.500h5" stroke="#5a86c8" stroke-width="1"/><text x="9.300" y="15.300" font-size="8.500" font-weight="bold" fill="#4a3ab8" font-family="Liberation Sans,sans-serif">?</text></svg>
<div class="t" style="left:120px;top:256px;"><span class="c">配置</span></div>
<svg style="left:79px;top:280px" width="16" height="16" viewBox="0 0 16 16" ><path d="M6.200 5.800 L10 9.500 L6.200 13.200" fill="none" stroke="#9a9a9a" stroke-width="1.250"/></svg>
<svg style="left:99px;top:280px" width="16" height="16" viewBox="0 0 16 16" ><rect x="1.500" y="3.500" width="7" height="2.600" rx=".500" fill="#3a88d0"/><rect x="1.500" y="6.100" width="8" height="3.200" rx=".500" fill="#3a9a62"/><rect x="1" y="9.300" width="9.500" height="3.400" rx=".500" fill="#d08040"/><path d="M1 12.800h9.500" stroke="#a85a20" stroke-width=".800"/><path d="M9.300 2 L11.800 1.200 L15.600 12.300 L12.800 13 z" fill="#f5b040" stroke="#d89020" stroke-width=".600"/></svg>
<div class="t" style="left:120px;top:279px;letter-spacing:-0.686px;">JRE <span class="c">系统库</span> [JavaSE-1.8]</div>
<svg style="left:79px;top:303px" width="16" height="16" viewBox="0 0 16 16" ><path d="M6.200 5.800 L10 9.500 L6.200 13.200" fill="none" stroke="#9a9a9a" stroke-width="1.250"/></svg>
<svg style="left:99px;top:303px" width="16" height="16" viewBox="0 0 16 16" ><rect x="1.500" y="3.500" width="7" height="2.600" rx=".500" fill="#3a88d0"/><rect x="1.500" y="6.100" width="8" height="3.200" rx=".500" fill="#3a9a62"/><rect x="1" y="9.300" width="9.500" height="3.400" rx=".500" fill="#d08040"/><path d="M1 12.800h9.500" stroke="#a85a20" stroke-width=".800"/><path d="M9.300 2 L11.800 1.200 L15.600 12.300 L12.800 13 z" fill="#f5b040" stroke="#d89020" stroke-width=".600"/></svg>
<div class="t" style="left:120px;top:302px;letter-spacing:0.448px;">Maven Dependencies</div>
<svg style="left:99px;top:326px" width="16" height="16" viewBox="0 0 16 16" ><path d="M2.500 1.500h7l3 3v10h-10z" fill="#fffef6" stroke="#a89a58"/><path d="M9.500 1.500v3h3" fill="#f0e8c0" stroke="#a89a58" stroke-width=".800"/><rect x="3.500" y="7" width="8.500" height="6" fill="#e8f0fb"/><text x="3.500" y="12.700" font-size="7.500" font-weight="bold" fill="#2a5ab0" font-family="Liberation Sans,sans-serif">M</text></svg>
<div class="t" style="left:120px;top:325px;letter-spacing:0.632px;">pom.xml</div>
<svg style="left:59px;top:349px" width="16" height="16" viewBox="0 0 16 16" ><path d="M6.200 5.800 L10 9.500 L6.200 13.200" fill="none" stroke="#9a9a9a" stroke-width="1.250"/></svg>
<svg style="left:79px;top:349px" width="16" height="16" viewBox="0 0 16 16" ><path d="M0.5 2.5 q0-2 2-2 h3 q1.500 0 2 1.500 h4.0 q1.500 0 1.500 1.500 v8.0 q0 1.500-1.500 1.500 h-10.0 q-1.500 0-1.500-1.500z" fill="url(#gf)" stroke="#cf9232" stroke-width="1"/><rect x="6" y="4.500" width="4.500" height="4.500" fill="#e9a030" stroke="#6b4418" stroke-width="1.100"/><path d="M8.250 9v2M5.500 11.500v-1h6v1" stroke="#3a3a5a" fill="none" stroke-width="1"/><rect x="3.500" y="11.500" width="4" height="4" fill="#5a90e0" stroke="#1a22a0" stroke-width="1"/><rect x="9.500" y="11.500" width="4" height="4" fill="#5a90e0" stroke="#1a22a0" stroke-width="1"/></svg>
<div class="t" style="left:100px;top:348px;letter-spacing:0.620px;">com.primeton.eos.project.common</div>
<svg style="left:59px;top:372px" width="16" height="16" viewBox="0 0 16 16" ><path d="M6.200 5.800 L10 9.500 L6.200 13.200" fill="none" stroke="#9a9a9a" stroke-width="1.250"/></svg>
<svg style="left:79px;top:372px" width="16" height="16" viewBox="0 0 16 16" ><path d="M0.5 2.5 q0-2 2-2 h3 q1.500 0 2 1.500 h4.0 q1.500 0 1.500 1.500 v8.0 q0 1.500-1.500 1.500 h-10.0 q-1.500 0-1.500-1.500z" fill="url(#gf)" stroke="#cf9232" stroke-width="1"/><rect x="6" y="4.500" width="4.500" height="4.500" fill="#e9a030" stroke="#6b4418" stroke-width="1.100"/><path d="M8.250 9v2M5.500 11.500v-1h6v1" stroke="#3a3a5a" fill="none" stroke-width="1"/><rect x="3.500" y="11.500" width="4" height="4" fill="#5a90e0" stroke="#1a22a0" stroke-width="1"/><rect x="9.500" y="11.500" width="4" height="4" fill="#5a90e0" stroke="#1a22a0" stroke-width="1"/></svg>
<div class="t" style="left:100px;top:371px;letter-spacing:0.776px;">com.primeton.eos.project.core</div>
<svg style="left:59px;top:395px" width="16" height="16" viewBox="0 0 16 16" ><path d="M4.3 7.6 L8 11.2 L11.700 7.600" fill="none" stroke="#3c3c3c" stroke-width="1.250"/></svg>
<svg style="left:79px;top:395px" width="16" height="16" viewBox="0 0 16 16" ><path d="M0.5 2.5 q0-2 2-2 h3 q1.500 0 2 1.500 h4.0 q1.500 0 1.500 1.500 v8.0 q0 1.500-1.500 1.500 h-10.0 q-1.500 0-1.500-1.500z" fill="url(#gf)" stroke="#cf9232" stroke-width="1"/><rect x="6" y="4.500" width="4.500" height="4.500" fill="#e9a030" stroke="#6b4418" stroke-width="1.100"/><path d="M8.250 9v2M5.500 11.500v-1h6v1" stroke="#3a3a5a" fill="none" stroke-width="1"/><rect x="3.500" y="11.500" width="4" height="4" fill="#5a90e0" stroke="#1a22a0" stroke-width="1"/><rect x="9.500" y="11.500" width="4" height="4" fill="#5a90e0" stroke="#1a22a0" stroke-width="1"/></svg>
<div class="t" style="left:100px;top:394px;letter-spacing:0.678px;">com.primeton.eos.restful</div>
<svg style="left:79px;top:418px" width="16" height="16" viewBox="0 0 16 16" ><path d="M6.200 5.800 L10 9.500 L6.200 13.200" fill="none" stroke="#9a9a9a" stroke-width="1.250"/></svg>
<svg style="left:99px;top:418px" width="16" height="16" viewBox="0 0 16 16" ><path d="M0.5 3.0 q0-2 2-2 h3 q1.500 0 2 1.500 h4.0 q1.500 0 1.500 1.500 v7.5 q0 1.500-1.500 1.500 h-10.0 q-1.500 0-1.500-1.500z" fill="url(#gf)" stroke="#cf9232" stroke-width="1"/><path d="M6.500 6.500h7M5.500 8l1.500 1.500-1.500 1.500 1.500 1.500-1.500 1.500" stroke="#d0204a" stroke-width="1.100" fill="none"/><path d="M9 7.500h4.500l2 2v6.500h-6.500z" fill="#fff" stroke="#c8c090" stroke-width=".700"/><text x="9.700" y="15.300" font-size="7.500" font-weight="bold" fill="#4a3ab8" font-family="Liberation Sans,sans-serif">?</text></svg>
<div class="t" style="left:120px;top:417px;"><span class="c">构件</span></div>
<svg style="left:79px;top:441px" width="16" height="16" viewBox="0 0 16 16" ><path d="M6.200 5.800 L10 9.500 L6.200 13.200" fill="none" stroke="#9a9a9a" stroke-width="1.250"/></svg>
<svg style="left:99px;top:441px" width="16" height="16" viewBox="0 0 16 16" ><path d="M0.5 3.0 q0-2 2-2 h3 q1.500 0 2 1.500 h4.0 q1.500 0 1.500 1.500 v7.5 q0 1.500-1.500 1.500 h-10.0 q-1.500 0-1.500-1.500z" fill="url(#gf)" stroke="#cf9232" stroke-width="1"/><path d="M9 7.500h4.500l2 2v6.500h-6.500z" fill="#fff" stroke="#c8c090" stroke-width=".700"/><text x="9.700" y="15.300" font-size="7.500" font-weight="bold" fill="#4a3ab8" font-family="Liberation Sans,sans-serif">?</text></svg>
<div class="t" style="left:120px;top:440px;"><span class="c">数据</span></div>
<svg style="left:79px;top:464px" width="16" height="16" viewBox="0 0 16 16" ><path d="M4.3 7.6 L8 11.2 L11.700 7.600" fill="none" stroke="#3c3c3c" stroke-width="1.250"/></svg>
<svg style="left:99px;top:464px" width="16" height="16" viewBox="0 0 16 16" ><path d="M2.500 0.500h6l2.500 2.500v12.500h-8.500z" fill="#cfe8fb" stroke="#2a9ad8" stroke-width="1"/><path d="M0.500 3h2M0.500 5h2M0.500 7h2M0.500 9h2M0.500 11h2M0.500 13h2" stroke="#2a9ad8" stroke-width="1"/><path d="M9 7.500h4.500l2 2v6.500h-6.500z" fill="#fff" stroke="#c8c090" stroke-width=".700"/><text x="9.700" y="15.300" font-size="7.500" font-weight="bold" fill="#4a3ab8" font-family="Liberation Sans,sans-serif">?</text></svg>
<div class="t" style="left:120px;top:463px;"><span class="c">运算</span></div>
<svg style="left:99px;top:487px" width="16" height="16" viewBox="0 0 16 16" ><path d="M6.200 5.800 L10 9.500 L6.200 13.200" fill="none" stroke="#9a9a9a" stroke-width="1.250"/></svg>
<svg style="left:119px;top:487px" width="16" height="16" viewBox="0 0 16 16" ><path d="M0.5 3.0 q0-2 2-2 h3 q1.500 0 2 1.500 h4.0 q1.500 0 1.500 1.500 v7.5 q0 1.500-1.500 1.500 h-10.0 q-1.500 0-1.500-1.500z" fill="url(#gf)" stroke="#cf9232" stroke-width="1"/><path d="M8.500 16v-8q0-1.500 1.500-1.500h4q1.500 0 1.500 1.500v8" fill="#fff" stroke="#2ab0d8" stroke-width="1" stroke-dasharray="1.500 .800"/><text x="9.500" y="15" font-size="7.500" font-weight="bold" fill="#4a3ab8" font-family="Liberation Sans,sans-serif">?</text></svg>
<div class="t" style="left:140px;top:486px;"><span class="c">运算逻辑</span></div>
<svg style="left:39px;top:69px" width="16" height="16" viewBox="0 0 16 16" ><circle cx="5.800" cy="8.500" r="5.800" fill="#4f9be0"/><path d="M1.500 5.500a5.800 5.800 0 0 1 3.500-2.500l1.500 3.500-2.500 4.500z" fill="#d8ecff" opacity=".700"/><path d="M2 12c1.500-1 2-3 1.500-5" stroke="#bfe0ff" stroke-width="1" fill="none"/><circle cx="9.800" cy="4.300" r="4.300" fill="#fbb820"/><circle cx="9" cy="3.500" r="2.600" fill="#fde070"/><circle cx="11.800" cy="4.500" r="2.200" fill="none" stroke="#f09a10" stroke-width=".800"/><rect x="7" y="8" width="2.600" height="8" fill="#26364a"/><rect x="7.300" y="8.500" width="2" height="2" fill="#2a6ad0"/><rect x="7.600" y="14" width="1.400" height="1.400" fill="#3a9a4a"/><path d="M10.500 9.500h5" stroke="#3a3a3a" stroke-width="1.100"/><path d="M10.500 11.500h5" stroke="#e87818" stroke-width="1.100"/><path d="M10.500 13.500h5" stroke="#3a3a3a" stroke-width="1.100"/><path d="M9.800 15.500h6" stroke="#e87818" stroke-width="1.100"/></svg>
<svg style="left:139.5px;top:71.5px" width="11" height="11" viewBox="0 0 11 11" ><path d="M1 1l2 0 2.500 2.500 2.500-2.500 2 0 0 2-2.500 2.500 2.500 2.500 0 2-2 0-2.500-2.500-2.500 2.500-2 0 0-2 2.500-2.500-2.500-2.500z" fill="#fff" stroke="#5a5a5a" stroke-width=".900"/></svg>
<svg style="left:323px;top:66px" width="16" height="16" viewBox="0 0 16 16" ><rect x="1.500" y="1.500" width="10" height="10" fill="#f4f8fd" stroke="#b8c8e0"/><rect x="3.500" y="3.500" width="10" height="10" fill="url(#gb)" stroke="#9ab0d0"/><path d="M5.500 8.500h6" stroke="#1f5a9a" stroke-width="1.600"/></svg>
<div class="abs" style="left:343.500px;top:63px;width:22px;height:21px;background:#cce6fc;border:1px solid #98c8f4;border-radius:3px"></div>
<svg style="left:347px;top:65.5px" width="16" height="16" viewBox="0 0 16 16" ><path d="M14 3v3h-8v2.500l-5-4 5-4v2.500z" fill="#fde9b0" stroke="#cf9420" stroke-width="1" stroke-linejoin="round"/><path d="M2 9.500v3h8v2.500l5-4-5-4v2.500z" fill="#fde9b0" stroke="#cf9420" stroke-width="1" stroke-linejoin="round"/></svg>
<div class="abs" style="left:368px;top:65px;width:1px;height:18px;background:#6a7080"></div>
<svg style="left:377px;top:66.5px" width="16" height="16" viewBox="0 0 16 16" ><path d="M1 7.500 C1.500 3.500 5 1.500 8.200 3 L9.700 1 L11.300 6.800 L5.500 6.300 L7 4.600 C5 3.800 3.500 5 3.200 7.500 Z" fill="#fbd868" stroke="#c8901a" stroke-width=".700" stroke-linejoin="round"/><path d="M15 8.500 C14.500 12.500 11 14.500 7.800 13 L6.300 15 L4.700 9.200 L10.500 9.700 L9 11.400 C11 12.200 12.500 11 12.800 8.500 Z" fill="#fbd868" stroke="#c8901a" stroke-width=".700" stroke-linejoin="round"/></svg>
<svg style="left:408.5px;top:68.5px" width="11" height="7" viewBox="0 0 11 7" ><path d="M1 1h9l-4.500 5z" fill="#fff" stroke="#5a5a5a" stroke-width="1"/></svg>
<svg style="left:428.5px;top:69px" width="11" height="4" viewBox="0 0 11 4" ><rect x="1" y="0.500" width="9" height="3" fill="#fff" stroke="#5a5a5a" stroke-width="1"/></svg>
<svg style="left:452px;top:69px" width="10" height="10" viewBox="0 0 10 10" ><rect x="0.600" y="0.600" width="8.800" height="8.800" fill="#fff" stroke="#5e5e5e" stroke-width="1.100"/><path d="M0.600 1.700h8.800" stroke="#5e5e5e" stroke-width="1.300"/></svg>
<div class="t" style="left:58px;top:68px;"><span class="c">资源管理器</span></div>
<div class="panel" style="left:34px;top:516px;width:443px;height:449px">
<div class="hdr" style="height:29px;background:#f3f5fb"></div>
<div class="abs" style="left:0;top:0;width:168px;height:30px;background:linear-gradient(#dfe6f0,#f4f7fa 45%,#fff 85%);border-radius:9px 9px 0 0"></div>
</div>
<div class="t" style="left:58px;top:522px;"><span class="c">数据源资源管理器</span></div>
<svg style="left:39px;top:550px" width="16" height="16" viewBox="0 0 16 16" ><path d="M4.3 7.6 L8 11.2 L11.700 7.600" fill="none" stroke="#3c3c3c" stroke-width="1.250"/></svg>
<svg style="left:59px;top:550px" width="16" height="16" viewBox="0 0 16 16" ><path d="M1.500 13.500 V4 q0-1.500 1.500-1.500 h3 l1.500 1.500 h5 q1 0 1 1 v2" fill="#fdf0c8" stroke="#c98e2e"/><path d="M1.500 13.500 L4.500 7.500 h11 L12.500 13.500z" fill="url(#gf)" stroke="#c98e2e"/></svg>
<div class="t" style="left:80px;top:549px;letter-spacing:0.409px;">ODA <span class="c">数据源</span></div>
<svg style="left:79px;top:573px" width="16" height="16" viewBox="0 0 16 16" ><path d="M1.500 13.500 V4 q0-1.500 1.500-1.500 h3 l1.500 1.500 h5 q1 0 1 1 v2" fill="#fdf0c8" stroke="#c98e2e"/><path d="M1.500 13.500 L4.500 7.500 h11 L12.500 13.500z" fill="url(#gf)" stroke="#c98e2e"/></svg>
<div class="t" style="left:100px;top:572px;letter-spacing:0.180px;">Web Services <span class="c">数据源</span></div>
<svg style="left:79px;top:596px" width="16" height="16" viewBox="0 0 16 16" ><path d="M1.500 13.500 V4 q0-1.500 1.500-1.500 h3 l1.500 1.500 h5 q1 0 1 1 v2" fill="#fdf0c8" stroke="#c98e2e"/><path d="M1.500 13.500 L4.500 7.500 h11 L12.500 13.500z" fill="url(#gf)" stroke="#c98e2e"/></svg>
<div class="t" style="left:100px;top:595px;letter-spacing:0.469px;">XML <span class="c">数据源</span></div>
<svg style="left:79px;top:619px" width="16" height="16" viewBox="0 0 16 16" ><path d="M1.500 13.500 V4 q0-1.500 1.500-1.500 h3 l1.500 1.500 h5 q1 0 1 1 v2" fill="#fdf0c8" stroke="#c98e2e"/><path d="M1.500 13.500 L4.500 7.500 h11 L12.500 13.500z" fill="url(#gf)" stroke="#c98e2e"/></svg>
<div class="t" style="left:100px;top:618px;"><span class="c">平面文件数据源</span></div>
<svg style="left:39px;top:642px" width="16" height="16" viewBox="0 0 16 16" ><path d="M4.3 7.6 L8 11.2 L11.700 7.600" fill="none" stroke="#3c3c3c" stroke-width="1.250"/></svg>
<svg style="left:59px;top:642px" width="16" height="16" viewBox="0 0 16 16" ><path d="M1.500 13.500 V4 q0-1.500 1.500-1.500 h3 l1.500 1.500 h5 q1 0 1 1 v2" fill="#fdf0c8" stroke="#c98e2e"/><path d="M1.500 13.500 L4.500 7.500 h11 L12.500 13.500z" fill="url(#gf)" stroke="#c98e2e"/></svg>
<div class="t" style="left:80px;top:641px;"><span class="c">数据库连接</span></div>
<svg style="left:79px;top:665px" width="16" height="16" viewBox="0 0 16 16" ><path d="M2 3.500v9.500c0 1.300 2.600 2.400 5.800 2.400s5.800-1.100 5.800-2.400v-9.500" fill="#c4c4c4" stroke="#7a7a7a" stroke-width=".900"/><path d="M2 6.700c0 1.300 2.600 2.400 5.800 2.400s5.800-1.100 5.800-2.400M2 9.900c0 1.300 2.600 2.400 5.800 2.400s5.800-1.100 5.800-2.400" fill="none" stroke="#6a6a6a" stroke-width=".900"/><ellipse cx="7.800" cy="3.500" rx="5.800" ry="2.400" fill="#ececec" stroke="#7a7a7a" stroke-width=".900"/></svg>
<div class="t" style="left:100px;top:664px;letter-spacing:0.810px;">project</div>
<svg style="left:38px;top:523px" width="16" height="16" viewBox="0 0 16 16" ><path d="M1 3l4-1.500 4 1.500 4-1.500v11l-4 1.500-4-1.500-4 1.500z" fill="#6aaa2a" stroke="#3a6a1a" stroke-width=".700"/><path d="M5 1.500v11.500M9 3v11" stroke="#e8f0a0" stroke-width="1"/><path d="M2 5l2 2-2 3M6.500 4l1.500 3-1.500 4" stroke="#fbe060" stroke-width="1.200" fill="none"/><rect x="10" y="6" width="5" height="8" rx="1" fill="#3a7a4a" stroke="#2a4a2a" stroke-width=".600"/><path d="M10.500 8.500h4M10.500 11h4" stroke="#d0e8d0" stroke-width=".800"/></svg>
<svg style="left:184.5px;top:525.5px" width="11" height="11" viewBox="0 0 11 11" ><path d="M1 1l2 0 2.500 2.500 2.500-2.500 2 0 0 2-2.500 2.500 2.500 2.500 0 2-2 0-2.500-2.500-2.500 2.500-2 0 0-2 2.500-2.500-2.500-2.500z" fill="#fff" stroke="#5a5a5a" stroke-width=".900"/></svg>
<svg style="left:207.5px;top:520px" width="16" height="16" viewBox="0 0 16 16" ><rect x="1.500" y="1.500" width="10" height="10" fill="#f4f8fd" stroke="#b8c8e0"/><rect x="3.500" y="3.500" width="10" height="10" fill="url(#gb)" stroke="#9ab0d0"/><path d="M5.500 8.500h6" stroke="#1f5a9a" stroke-width="1.600"/></svg>
<svg style="left:230px;top:520px" width="16" height="16" viewBox="0 0 16 16" ><path d="M14 3v3h-8v2.500l-5-4 5-4v2.500z" fill="#fde9b0" stroke="#cf9420" stroke-width="1" stroke-linejoin="round"/><path d="M2 9.500v3h8v2.500l5-4-5-4v2.500z" fill="#fde9b0" stroke="#cf9420" stroke-width="1" stroke-linejoin="round"/></svg>
<div class="abs" style="left:252px;top:519px;width:1px;height:18px;background:#6a7080"></div>
<div class="abs" style="left:258.500px;top:517px;width:10px;height:21px;background:#cce6fc;border:1px solid #98c8f4;border-radius:3px"></div>
<div class="panel" style="left:482px;top:62px;width:1403px;height:903px">
<div class="hdr" style="height:29px;background:#f3f5fb"></div>
<div class="abs" style="left:296.5px;top:0;width:166px;height:30px;background:linear-gradient(#dbe3ee,#eef2f7 45%,#fff 85%);border-radius:9px 9px 0 0"></div>
<div class="abs" style="left:2px;top:31px;width:12px;height:849px;background:#f3f3f3"></div>
<div class="abs" style="left:2px;top:111px;width:12px;height:200px;background:repeating-conic-gradient(#4b95e8 0 25%,#c2dbf8 0 50%) 0 0/2px 2px"></div>
<div class="abs" style="left:31px;top:31px;width:1px;height:849px;background:#f0f0f0"></div>
<div class="abs" style="left:32px;top:192px;width:1335px;height:20px;background:#e8f2fe"></div>
<div class="abs" style="left:1367px;top:31px;width:20px;height:849px;background:#f0f0f0"></div>
<div class="abs" style="left:1387px;top:31px;width:14px;height:870px;background:#f8f8f8"></div>
<div class="abs" style="left:0;top:880px;width:1387px;height:21px;background:#f0f0f0"></div>
<svg style="left:1371px;top:36px" width="12" height="10" viewBox="0 0 12 10"><path d="M1 8.5 L6 1.5 L11 8.5z" fill="#a0a0a0" stroke="#a0a0a0" stroke-linejoin="round"/></svg>
<svg style="left:1371px;top:863px" width="12" height="10" viewBox="0 0 12 10"><path d="M1 1.5 L6 8.5 L11 1.5z" fill="#909090" stroke="#909090" stroke-linejoin="round"/></svg>
<svg style="left:1350px;top:884px" width="10" height="12" viewBox="0 0 10 12"><path d="M1.5 1 L8.5 6 L1.5 11z" fill="#909090" stroke="#909090" stroke-linejoin="round"/></svg>
</div>
<div class="code" style="left:516.5px;top:96px"><span class="kw">package</span> com.primeton.eos.project;</div>
<div class="code" style="left:516.5px;top:136px"><span class="kw">import</span> org.springframework.boot.SpringApplication;</div>
<div class="code" style="left:516.5px;top:176px"><span class="an">@SpringBootApplication</span></div>
<div class="code" style="left:516.5px;top:196px"><span class="an">@EnableFeignClients</span></div>
<div class="code" style="left:516.5px;top:216px"><span class="an">@EnableCircuitBreaker</span></div>
<div class="code" style="left:516.5px;top:236px"><span class="an">@EnableDiscoveryClient</span></div>
<div class="code" style="left:516.5px;top:256px"><span class="kw">public</span> <span class="kw">class</span> Application {</div>
<div class="code" style="left:516.5px;top:276px">    <span class="kw">public</span> <span class="kw">static</span> <span class="kw">void</span> main(String[] <span class="lv">args</span>) {</div>
<div class="code" style="left:516.5px;top:296px">        SpringApplication.<i>run</i>(Application.<span class="kw">class</span>, <span class="lv">args</span>);</div>
<div class="abs" style="left:966px;top:136px;width:10px;height:16px;border:1px solid #9c9c9c"></div>
<div class="abs" style="left:969px;top:148px;width:5px;height:1px;background:repeating-linear-gradient(90deg,#9c9c9c 0 1px,transparent 1px 3px)"></div>
<svg style="left:504px;top:138px" width="9" height="9" viewBox="0 0 9 9"><circle cx="4.5" cy="4.5" r="4" fill="#e4eaf4" stroke="#7a8aa8" stroke-width=".8"/><path d="M2.2 4.5h4.6M4.5 2.2v4.6" stroke="#2a3a5a" stroke-width="1"/></svg>
<div class="t" style="left:486px;top:66.500px;font-size:9.500px;color:#9a9fae;letter-spacing:.350px">(x)=</div>
<svg style="left:545px;top:71px" width="16" height="14" viewBox="0 0 16 14"><circle cx="4" cy="4" r="3" fill="#a8c0dc" stroke="#7a9ac0" stroke-width=".800"/><circle cx="10.500" cy="8.500" r="3.300" fill="#88aed8" stroke="#6a8ab8" stroke-width=".800"/></svg>
<svg style="left:603px;top:69px" width="17" height="17" viewBox="0 0 17 17"><circle cx="3.500" cy="3.500" r="2.500" fill="#8ad0a0"/><rect x="5.500" y="6" width="10" height="7.500" fill="#e8eef8" stroke="#a0b4d0"/><rect x="7.500" y="8" width="6" height="3.500" fill="#a8c0e0"/><path d="M8 15.500h5" stroke="#a0b4d0" stroke-width="1.500"/></svg>
<svg style="left:692px;top:69px" width="17" height="17" viewBox="0 0 17 17"><circle cx="7" cy="8" r="6.500" fill="#8ac8a0"/><path d="M2 6a6 6 0 0 1 5-4l1 4-3 4z" fill="#e8f8e8" opacity=".800"/><circle cx="11" cy="5.500" r="2.500" fill="#f0c890"/><path d="M7 15v-3a4 4 0 0 1 8 0v3z" fill="#7a9ad0"/><circle cx="9.500" cy="3.500" r="2.300" fill="#fbd870"/></svg>
<svg style="left:785px;top:69.500px" width="12" height="15" viewBox="0 0 12 15"><path d="M0.500 0.500h7.500l3 3v10.500h-10.500z" fill="#fffef8" stroke="#b09a58"/><path d="M8 0.500v3h3" fill="#f4ecc8" stroke="#b09a58" stroke-width=".800"/><path d="M7.200 4.500v5.200a2 2 0 0 1-3.800 .800" fill="none" stroke="#2a62b0" stroke-width="1.800"/></svg>
<svg style="left:925.5px;top:71.5px" width="11" height="11" viewBox="0 0 11 11" ><path d="M1 1l2 0 2.500 2.500 2.500-2.500 2 0 0 2-2.500 2.500 2.500 2.500 0 2-2 0-2.500-2.500-2.500 2.500-2 0 0-2 2.500-2.500-2.500-2.500z" fill="#fff" stroke="#5a5a5a" stroke-width=".900"/></svg>
<svg style="left:1836.5px;top:69px" width="11" height="4" viewBox="0 0 11 4" ><rect x="1" y="0.500" width="9" height="3" fill="#fff" stroke="#5a5a5a" stroke-width="1"/></svg>
<svg style="left:1860.2px;top:69px" width="10" height="10" viewBox="0 0 10 10" ><rect x="0.600" y="0.600" width="8.800" height="8.800" fill="#fff" stroke="#5e5e5e" stroke-width="1.100"/><path d="M0.600 1.700h8.800" stroke="#5e5e5e" stroke-width="1.300"/></svg>
<div class="t" style="left:505.5px;top:68px;color:#969696"><span class="c">变量</span></div>
<div class="t" style="left:563.5px;top:68px;color:#969696"><span class="c">断点</span></div>
<div class="t" style="left:622.5px;top:68px;color:#969696"><span class="c">业务资源</span></div>
<div class="t" style="left:711.5px;top:68px;color:#969696"><span class="c">组织模型</span></div>
<div class="t" style="left:802.3px;top:68px;letter-spacing:0.426px;">Application.java</div>
<svg style="left:2px;top:968px" width="16" height="16" viewBox="0 0 16 16" ><circle cx="7.500" cy="7" r="6.500" fill="url(#gg)" stroke="#2a8a2a" stroke-width=".700"/><path d="M10.300 4.600a3.700 3.700 0 1 0 0 4.800" fill="none" stroke="#fff" stroke-width="2"/><path d="M9.500 9.500v6.500l6-3.300z" fill="#3aa83a" stroke="#eaf6ea" stroke-width=".900" stroke-linejoin="round"/></svg>
<div class="abs" style="left:1570px;top:970.0px;width:2px;height:2px;background:#8f8462"></div><div class="abs" style="left:1571px;top:971.0px;width:1px;height:1px;background:#fff"></div><div class="abs" style="left:1570px;top:974.7px;width:2px;height:2px;background:#8f8462"></div><div class="abs" style="left:1571px;top:975.7px;width:1px;height:1px;background:#fff"></div><div class="abs" style="left:1570px;top:979.4px;width:2px;height:2px;background:#8f8462"></div><div class="abs" style="left:1571px;top:980.4px;width:1px;height:1px;background:#fff"></div><div class="abs" style="left:1570px;top:984.1px;width:2px;height:2px;background:#8f8462"></div><div class="abs" style="left:1571px;top:985.1px;width:1px;height:1px;background:#fff"></div>
<div class="abs" style="left:1892px;top:970.0px;width:2px;height:2px;background:#8f8462"></div><div class="abs" style="left:1893px;top:971.0px;width:1px;height:1px;background:#fff"></div><div class="abs" style="left:1892px;top:974.7px;width:2px;height:2px;background:#8f8462"></div><div class="abs" style="left:1893px;top:975.7px;width:1px;height:1px;background:#fff"></div><div class="abs" style="left:1892px;top:979.4px;width:2px;height:2px;background:#8f8462"></div><div class="abs" style="left:1893px;top:980.4px;width:1px;height:1px;background:#fff"></div><div class="abs" style="left:1892px;top:984.1px;width:2px;height:2px;background:#8f8462"></div><div class="abs" style="left:1893px;top:985.1px;width:1px;height:1px;background:#fff"></div>
<svg style="left:1901px;top:969px" width="12" height="18" viewBox="0 0 12 18"><path d="M6 1a4.500 4.500 0 0 1 4.500 4.500c0 2.500-2 3.500-2 6h-5c0-2.500-2-3.500-2-6a4.500 4.500 0 0 1 4.500-4.500z" fill="#fbe78a" stroke="#e0a020" stroke-width="1"/><ellipse cx="6" cy="6" rx="2" ry="3.500" fill="#fffbe0"/><rect x="4" y="12" width="4" height="3.500" fill="#5a6a80"/><rect x="4.500" y="13" width="3" height="1" fill="#d0d8e0"/></svg>
<div class="menu" style="left:263.5px;top:237px;width:426px;height:732px"></div>
<div class="abs" style="left:270px;top:723px;width:412px;height:25px;background:#f0f0f0;border-radius:4px"></div>
<div class="mi" style="left:308px;top:244px;"><span class="c">创建</span></div>
<svg style="left:663px;top:247px" width="8" height="12" viewBox="0 0 8 12"><path d="M1.8 1.3 L6.5 6 L1.8 10.7" fill="none" stroke="#3a3a3a" stroke-width="1.55"/></svg>
<svg style="left:276px;top:271px" width="16" height="16" viewBox="0 0 16 16" ><path d="M1 7.500 C1.500 3.500 5 1.500 8.200 3 L9.700 1 L11.300 6.800 L5.500 6.300 L7 4.600 C5 3.800 3.500 5 3.200 7.500 Z" fill="#fbd868" stroke="#c8901a" stroke-width=".700" stroke-linejoin="round"/><path d="M15 8.500 C14.500 12.500 11 14.500 7.800 13 L6.300 15 L4.700 9.200 L10.500 9.700 L9 11.400 C11 12.200 12.500 11 12.800 8.500 Z" fill="#fbd868" stroke="#c8901a" stroke-width=".700" stroke-linejoin="round"/></svg>
<div class="mi" style="left:308px;top:270px;letter-spacing:-0.604px;"><span class="c">刷新</span>(F)</div>
<div class="mi" style="right:1262px;top:270px;letter-spacing:-1.047px;">F5</div>
<div class="sep" style="left:274px;top:297px;width:405px"></div>
<div class="mi" style="left:308px;top:307px;letter-spacing:-0.202px;"><span class="c">打开</span>(O)</div>
<div class="mi" style="left:308px;top:333px;"><span class="c">打开方式</span></div>
<svg style="left:663px;top:336px" width="8" height="12" viewBox="0 0 8 12"><path d="M1.8 1.3 L6.5 6 L1.8 10.7" fill="none" stroke="#3a3a3a" stroke-width="1.55"/></svg>
<div class="sep" style="left:274px;top:360px;width:405px"></div>
<svg style="left:276px;top:371px" width="16" height="16" viewBox="0 0 16 16" ><path d="M1.500 1.500h5.500l2.500 2.500v8h-8z" fill="#f6f6f6" stroke="#d4d4d4"/><path d="M6.500 4.500h5.500l2.500 2.500v8h-8z" fill="#fafafa" stroke="#d0d0d0"/><path d="M8 8.500h5M8 10.500h5M8 12.500h5" stroke="#dcdcdc" stroke-width="1"/></svg>
<div class="mi dis" style="left:308px;top:370px;"><span class="c">复制</span></div>
<div class="mi dis" style="right:1262px;top:370px;letter-spacing:0.307px;">Ctrl+C</div>
<svg style="left:276px;top:397px" width="16" height="16" viewBox="0 0 16 16" ><path d="M1.500 1.500h5.500l2.500 2.500v8h-8z" fill="#fff" stroke="#c4a858"/><path d="M2 5h7v5.500h-7z" fill="#9ab4dc"/><path d="M2 7.500h7" stroke="#e8f0fb" stroke-width="1"/><path d="M6.500 4.500h5.500l2.500 2.500v8h-8z" fill="#fff" stroke="#b8a468"/><path d="M7 8h7v5.500h-7z" fill="#8aa8d8"/><path d="M7 10.500h7" stroke="#e8f0fb" stroke-width="1"/><path d="M6.500 15h8" stroke="#6a84b0" stroke-width="1"/></svg>
<div class="mi" style="left:308px;top:396px;"><span class="c">复制全名</span></div>
<svg style="left:276px;top:423px" width="16" height="16" viewBox="0 0 16 16" ><rect x="1.500" y="2.500" width="11" height="12.500" rx="1.500" fill="url(#gf)" stroke="#c8913a"/><path d="M4.500 3.500q0-2.500 2.500-2.500t2.500 2.500z" fill="#8a9ab8" stroke="#6a7a98" stroke-width=".700"/><path d="M7.500 6.500h4.500l2.500 2.500v6.500h-7z" fill="#fff" stroke="#8a9ab8"/><path d="M9 10.500h3M9 12.500h4" stroke="#7aa0d0" stroke-width="1"/></svg>
<div class="mi" style="left:308px;top:422px;"><span class="c">粘贴</span></div>
<div class="mi" style="right:1262px;top:422px;letter-spacing:0.500px;">Ctrl+V</div>
<svg style="left:276px;top:449px" width="16" height="16" viewBox="0 0 16 16" ><path d="M3.500 3.500l9 9M12.500 3.500l-9 9" stroke="#a6a6a6" stroke-width="3.400" stroke-linecap="round"/></svg>
<div class="mi dis" style="left:308px;top:448px;"><span class="c">删除</span></div>
<div class="mi dis" style="right:1262px;top:448px;"><span class="c">删除</span></div>
<div class="sep" style="left:274px;top:475px;width:405px"></div>
<div class="mi" style="left:308px;top:485px;"><span class="c">重构</span></div>
<svg style="left:663px;top:488px" width="8" height="12" viewBox="0 0 8 12"><path d="M1.8 1.3 L6.5 6 L1.8 10.7" fill="none" stroke="#3a3a3a" stroke-width="1.55"/></svg>
<div class="sep" style="left:274px;top:512px;width:405px"></div>
<svg style="left:276px;top:523px" width="16" height="16" viewBox="0 0 16 16" ><path d="M4 5l3 3 2-2 3 4" fill="none" stroke="#c8c8c8" stroke-width="1.300"/><path d="M9 11l4 0 0-3" fill="none" stroke="#c8c8c8" stroke-width="1.300"/><path d="M1 13.500h4M11 13.500h4" stroke="#d0d0d0" stroke-width="1.300"/></svg>
<div class="mi dis" style="left:308px;top:522px;"><span class="c">从上下文移除</span></div>
<div class="mi dis" style="right:1262px;top:522px;letter-spacing:0.821px;">Ctrl+Alt+Shift+<span class="c">向下</span></div>
<div class="sep" style="left:274px;top:549px;width:405px"></div>
<svg style="left:276px;top:560px" width="16" height="16" viewBox="0 0 16 16" ><path d="M1.500 8.500v6h13v-6h-2.500v3h-8v-3z" fill="#c8d4ec" stroke="#7a90c0"/><path d="M3 2l6 5M9 7v-3.500M9 7h-3.500" stroke="#7a90c0" stroke-width="1.300" fill="none"/></svg>
<div class="mi" style="left:308px;top:559px;letter-spacing:-0.430px;"><span class="c">导入</span>(I)...</div>
<svg style="left:276px;top:586px" width="16" height="16" viewBox="0 0 16 16" ><path d="M1.500 8.500v6h13v-6h-2.500v3h-8v-3z" fill="#c8d4ec" stroke="#7a90c0"/><path d="M5 9l6-6M11 3v3.500M11 3h-3.500" stroke="#7a90c0" stroke-width="1.300" fill="none"/></svg>
<div class="mi" style="left:308px;top:585px;letter-spacing:-0.405px;"><span class="c">导出</span>(O)...</div>
<div class="sep" style="left:274px;top:612px;width:405px"></div>
<div class="mi" style="left:308px;top:622px;letter-spacing:0.082px;">Open Cross References</div>
<svg style="left:276px;top:649px" width="16" height="16" viewBox="0 0 16 16" ><circle cx="7.500" cy="7.500" r="5.800" fill="url(#gg)" stroke="#2a8a2a" stroke-width=".800"/><path d="M9.800 5.700a2.900 2.900 0 1 0 0 3.600" fill="none" stroke="#fff" stroke-width="1.700"/></svg>
<div class="mi" style="left:308px;top:648px;letter-spacing:-0.762px;"><span class="c">切换类装入断点</span>(P)</div>
<svg style="left:276px;top:675px" width="16" height="16" viewBox="0 0 16 16" ><circle cx="6" cy="6" r="5.600" fill="#2e9a2e" stroke="#1a7a1a" stroke-width=".800"/><path d="M4.300 3v6l4.500-3z" fill="#fff"/><rect x="7.500" y="11" width="4" height="4" fill="#1e8a1e"/><rect x="11.500" y="11" width="4.500" height="4" fill="#e02020"/><rect x="7" y="10.500" width="9" height="5" fill="none" stroke="#303030" stroke-width=".800"/></svg>
<div class="mi" style="left:308px;top:674px;letter-spacing:0.223px;">Coverage As</div>
<svg style="left:663px;top:677px" width="8" height="12" viewBox="0 0 8 12"><path d="M1.8 1.3 L6.5 6 L1.8 10.7" fill="none" stroke="#3a3a3a" stroke-width="1.55"/></svg>
<svg style="left:276px;top:701px" width="16" height="16" viewBox="0 0 16 16" ><circle cx="8" cy="8" r="6.900" fill="#2e9a2e" stroke="#1a7a1a" stroke-width=".800"/><circle cx="8" cy="6.500" r="5.500" fill="#5cc05c" opacity=".7"/><path d="M5.800 3.800v8.400l6.200-4.200z" fill="#fff"/></svg>
<div class="mi" style="left:308px;top:700px;letter-spacing:-0.849px;"><span class="c">运行方式</span>(R)</div>
<svg style="left:663px;top:703px" width="8" height="12" viewBox="0 0 8 12"><path d="M1.8 1.3 L6.5 6 L1.8 10.7" fill="none" stroke="#3a3a3a" stroke-width="1.55"/></svg>
<svg style="left:276px;top:727px" width="16" height="16" viewBox="0 0 16 16" ><path d="M2 3l3 3M14 3l-3 3M1 8.500h3.500M15 8.500h-3.500M2 14l3-3M14 14l-3-3M6 1.500l1 2.500M10 1.500l-1 2.500" stroke="#2a6a6a" stroke-width="1.100" fill="none"/><ellipse cx="8" cy="9" rx="3.600" ry="4.500" fill="#7ab88a" stroke="#2a6a5a"/><ellipse cx="8" cy="4.800" rx="2" ry="1.500" fill="#4a8a7a"/><ellipse cx="7.300" cy="8.500" rx="1.500" ry="2.500" fill="#b8e0c0"/></svg>
<div class="mi" style="left:308px;top:726px;letter-spacing:-0.316px;"><span class="c">调试方式</span>(D)</div>
<svg style="left:663px;top:729px" width="8" height="12" viewBox="0 0 8 12"><path d="M1.8 1.3 L6.5 6 L1.8 10.7" fill="none" stroke="#3a3a3a" stroke-width="1.55"/></svg>
<div class="mi" style="left:308px;top:752px;letter-spacing:-0.629px;"><span class="c">概要分析方式</span>(P)</div>
<svg style="left:663px;top:755px" width="8" height="12" viewBox="0 0 8 12"><path d="M1.8 1.3 L6.5 6 L1.8 10.7" fill="none" stroke="#3a3a3a" stroke-width="1.55"/></svg>
<div class="mi" style="left:308px;top:778px;letter-spacing:-0.552px;"><span class="c">从本地历史记录复原</span>(Y)...</div>
<div class="mi" style="left:308px;top:804px;letter-spacing:-1.029px;"><span class="c">小组</span>(E)</div>
<svg style="left:663px;top:807px" width="8" height="12" viewBox="0 0 8 12"><path d="M1.8 1.3 L6.5 6 L1.8 10.7" fill="none" stroke="#3a3a3a" stroke-width="1.55"/></svg>
<div class="mi" style="left:308px;top:830px;letter-spacing:-0.029px;"><span class="c">比较对象</span>(A)</div>
<svg style="left:663px;top:833px" width="8" height="12" viewBox="0 0 8 12"><path d="M1.8 1.3 L6.5 6 L1.8 10.7" fill="none" stroke="#3a3a3a" stroke-width="1.55"/></svg>
<div class="mi" style="left:308px;top:856px;letter-spacing:-0.523px;"><span class="c">替换为</span>(L)</div>
<svg style="left:663px;top:859px" width="8" height="12" viewBox="0 0 8 12"><path d="M1.8 1.3 L6.5 6 L1.8 10.7" fill="none" stroke="#3a3a3a" stroke-width="1.55"/></svg>
<svg style="left:276px;top:883px" width="16" height="16" viewBox="0 0 16 16" ><circle cx="8" cy="8" r="8" fill="#62aa3e"/><path d="M2.600 11.500 C2.800 7.200 7.500 5.800 14 3.800 C14.300 9.500 11.500 13.800 6.200 13.800 C4.500 13.800 3.200 13 2.600 11.500Z" fill="#fff"/><path d="M4.200 13 C7.500 12.300 11 9.800 13 6.200" stroke="#62aa3e" stroke-width="1.500" fill="none"/><circle cx="3" cy="13.300" r="1.100" fill="#fff"/></svg>
<div class="mi" style="left:308px;top:882px;letter-spacing:0.365px;">Spring</div>
<svg style="left:663px;top:885px" width="8" height="12" viewBox="0 0 8 12"><path d="M1.8 1.3 L6.5 6 L1.8 10.7" fill="none" stroke="#3a3a3a" stroke-width="1.55"/></svg>
<svg style="left:276px;top:909px" width="16" height="16" viewBox="0 0 16 16" ><rect x="2.500" y="2.500" width="11" height="11" fill="#eef6fd" stroke="#8f9dc4" stroke-width="1"/><path d="M4.500 8.200l2.600 2.800 4.700-6.200" fill="none" stroke="#3a4878" stroke-width="1.500"/></svg>
<div class="mi" style="left:308px;top:908px;"><span class="c">验证</span></div>
<div class="sep" style="left:274px;top:935px;width:405px"></div>
<div class="mi" style="left:308px;top:945px;letter-spacing:-0.616px;"><span class="c">属性</span>(R)</div>
<div class="mi" style="right:1262px;top:945px;letter-spacing:0.613px;">Alt+Enter</div>
<div class="menu" style="left:685px;top:718px;width:359px;height:96px"></div>
<div class="abs" style="left:693px;top:723px;width:344px;height:25px;background:#f0f0f0;border-radius:4px"></div>
<svg style="left:697.2px;top:727.2px" width="16" height="16" viewBox="0 0 16 16" ><rect x="1.500" y="2.500" width="13" height="11" fill="#f2f9ff" stroke="#9a8c5c" stroke-width="1"/><rect x="1" y="2" width="14" height="3" fill="#4a9ae2"/><path d="M9 6.500v4a1.600 1.600 0 0 1-3 .800" fill="none" stroke="#3a6ab8" stroke-width="1.400"/></svg>
<svg style="left:697.2px;top:754px" width="16" height="16" viewBox="0 0 16 16" ><path d="M2 12.600 C1.500 7 6 4.500 15.600 1 C16.500 8 13.500 13.800 7 13.800 C5 13.800 3 13.400 2 12.600Z" fill="#b9cb35"/><path d="M1.200 13.900 C6 13.300 11 10.800 13.200 6.200" stroke="#5a9c30" stroke-width="1.300" fill="none"/><rect x=".300" y="13" width="1.800" height="1.800" fill="#3f9a3f"/></svg>
<div class="mi" style="left:729px;top:726px;letter-spacing:-0.386px;">1 Java <span class="c">应用程序</span></div>
<div class="mi" style="left:729px;top:752px;letter-spacing:0.561px;">2 Spring Boot App</div>
<div class="mi" style="left:729px;top:789px;letter-spacing:-0.562px;"><span class="c">调试</span> <span class="c">配置</span>(B)...</div>
<div class="mi" style="right:906.5px;top:726px;letter-spacing:0.569px;">Alt+Shift+D<span class="c">，</span>J</div>
<div class="mi" style="right:906.5px;top:752px;letter-spacing:0.603px;">Alt+Shift+D<span class="c">，</span>B</div>
<div class="sep" style="left:695px;top:779px;width:339px"></div>
<div class="abs" style="left:0;top:24px;width:1.5px;height:968px;background:#fff"></div>
<div class="abs" style="left:1918.5px;top:24px;width:1.5px;height:968px;background:#fff"></div>
<div class="abs" style="left:0;top:990px;width:1920px;height:2px;background:#fff"></div>
<div class="red" style="left:132px;top:226px;width:145px;height:29px"></div>
<div class="red" style="left:258px;top:694px;width:429px;height:30px"></div>
<div class="red" style="left:693px;top:719px;width:335px;height:32px"></div>
<svg style="left:0;top:0" width="1920" height="992" viewBox="0 0 1920 992"><path d="M1146 552.5 L1035 706.5 L1030.7 702 L1028.6 718.2 L1044.5 711.5 L1040.5 710.3 Z" fill="#ff1e10"/></svg>
</body></html>
